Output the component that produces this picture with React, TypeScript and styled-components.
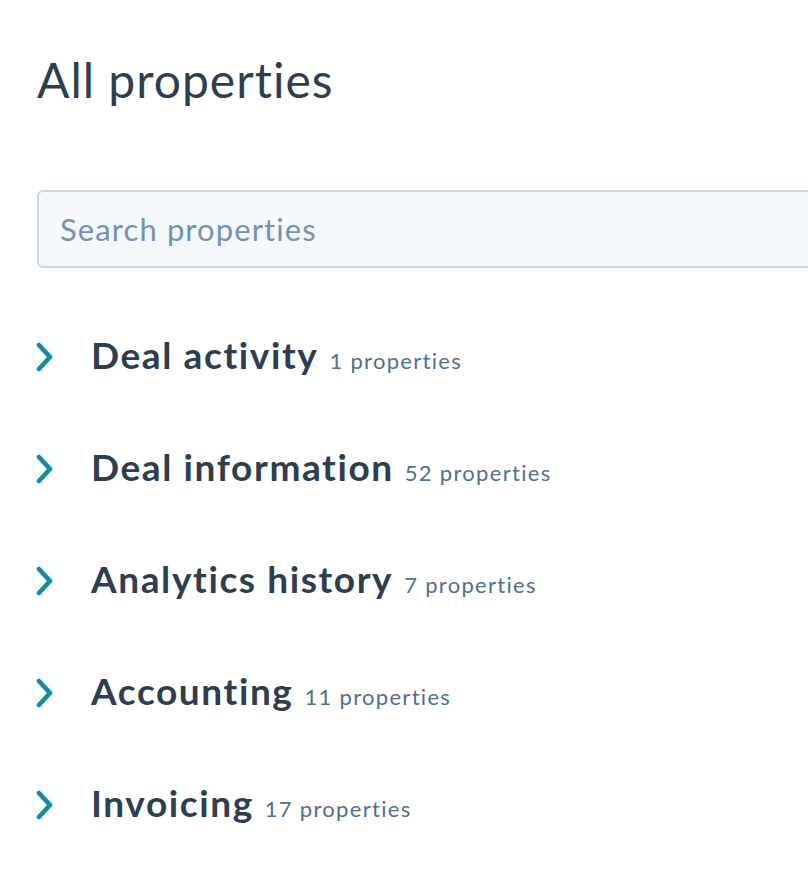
import React from "react";
import styled, { createGlobalStyle } from "styled-components";

const GlobalStyle = createGlobalStyle`
  html, body {
    margin: 0;
    padding: 0;
    background: #ffffff;
    overflow: hidden;
  }
  body {
    font-family: Lato, "Noto Sans", sans-serif;
    color: #2d3e50;
  }
`;

const groups = [
  { name: "Deal activity", count: 1 },
  { name: "Deal information", count: 52 },
  { name: "Analytics history", count: 7 },
  { name: "Accounting", count: 11 },
  { name: "Invoicing", count: 17 },
];

const Chevron = () => (
  <svg width="18" height="30" viewBox="0 0 18 30" fill="none">
    <path
      d="M3 3 L14 15 L3 27"
      stroke="#1689a4"
      strokeWidth="4.6"
      strokeLinecap="round"
      strokeLinejoin="round"
    />
  </svg>
);

const App = () => {
  return (
    <>
      <GlobalStyle />
      <Page>
        <Title>All properties</Title>
        <SearchBox>
          <Search placeholder="Search properties" />
        </SearchBox>
        <List>
          {groups.map((g) => (
            <Group key={g.name}>
              <Toggle>
                <Chevron />
              </Toggle>
              <GroupName>{g.name}</GroupName>
              <Count>{g.count} properties</Count>
            </Group>
          ))}
        </List>
      </Page>
    </>
  );
};

const Page = styled.div`
  width: 808px;
  height: 872px;
  overflow: hidden;
  padding: 52px 0 0 37px;
  box-sizing: border-box;
  display: flex;
  flex-direction: column;
`;

const Title = styled.h1`
  margin: 0;
  font-size: 48px;
  line-height: 56px;
  font-weight: 400;
  color: #2d3e50;
  letter-spacing: 1px;
`;

const SearchBox = styled.div`
  margin-top: 82px;
  margin-right: -20px;
`;

const Search = styled.input`
  display: block;
  width: 100%;
  height: 78px;
  box-sizing: border-box;
  border: 2px solid #cbd6e2;
  border-radius: 6px;
  background: #f5f8fa;
  padding: 0 21px;
  font-family: Lato, "Noto Sans", sans-serif;
  font-size: 31px;
  letter-spacing: 1.1px;
  color: #33475b;
  outline: none;
  &::placeholder {
    color: #7591b0;
  }
`;

const List = styled.ul`
  list-style: none;
  margin: 66px 0 0;
  padding: 0;
  display: flex;
  flex-direction: column;
  gap: 70px;
`;

const Group = styled.li`
  display: flex;
  align-items: baseline;
  height: 42px;
`;

const Toggle = styled.span`
  width: 55px;
  flex-shrink: 0;
  align-self: center;
  display: flex;
  align-items: center;
  margin-left: -1px;
  margin-top: 4px;
`;

const GroupName = styled.span`
  font-size: 37px;
  font-weight: 700;
  color: #2d3e50;
  line-height: 42px;
  letter-spacing: 1.6px;
`;

const Count = styled.span`
  margin-left: 11px;
  font-size: 22px;
  color: #516f90;
  letter-spacing: 1.3px;
`;

export default App;
